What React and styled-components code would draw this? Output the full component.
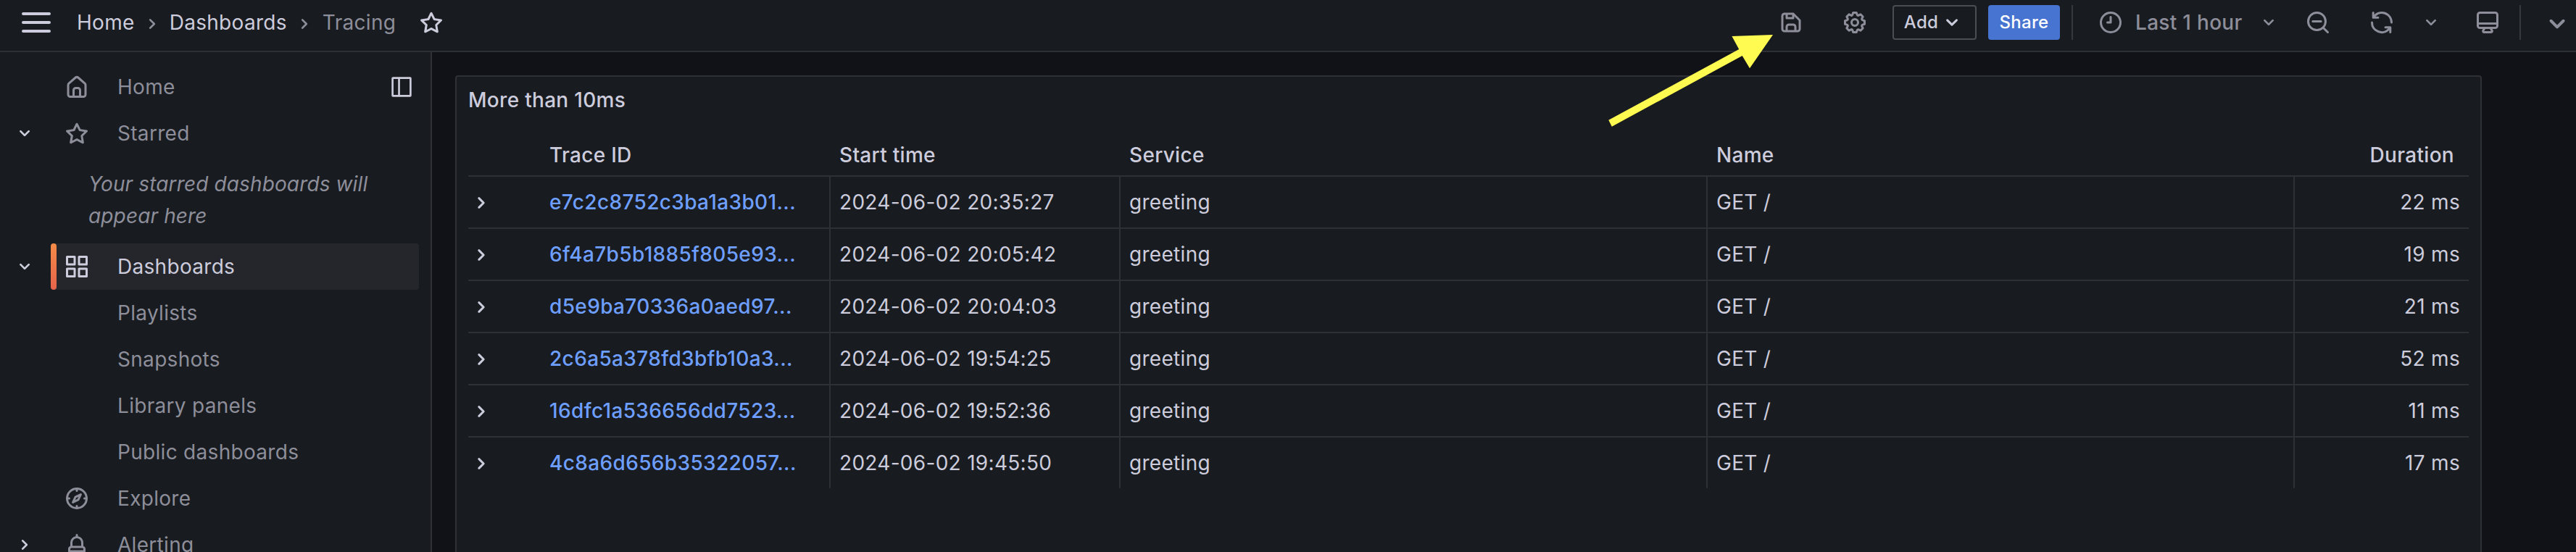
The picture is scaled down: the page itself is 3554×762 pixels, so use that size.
import React from "react";
import styled, { createGlobalStyle, css } from "styled-components";

const color = {
  canvas: "#111217",
  surface: "#181b1f",
  line: "#2e3035",
  text: "#ccccdc",
  muted: "#8d8e9a",
  link: "#6e9fff",
  primary: "#4773d1",
};

const GlobalStyle = createGlobalStyle`
  * { box-sizing: border-box; }
  body {
    margin: 0;
    overflow: hidden;
    background: ${color.canvas};
    color: ${color.text};
    font-family: Inter, "Liberation Sans", sans-serif;
    font-size: 28px;
    line-height: 44px;
    letter-spacing: 0.3px;
  }
`;

const paths = {
  down: "M17,9.17a1,1,0,0,0-1.41,0L12,12.71,8.46,9.17a1,1,0,0,0-1.41,0,1,1,0,0,0,0,1.42l4.24,4.24a1,1,0,0,0,1.42,0L17,10.59A1,1,0,0,0,17,9.17Z",
  right:
    "M14.83,11.29,10.59,7.05a1,1,0,0,0-1.42,0,1,1,0,0,0,0,1.41L12.71,12,9.17,15.54a1,1,0,0,0,0,1.41,1,1,0,0,0,.71.29,1,1,0,0,0,.71-.29l4.24-4.24A1,1,0,0,0,14.83,11.29Z",
  home: "M20,8h0L14,2.74a3,3,0,0,0-4,0L4,8a3,3,0,0,0-1,2.26V19a3,3,0,0,0,3,3H18a3,3,0,0,0,3-3V10.25A3,3,0,0,0,20,8ZM14,20H10V15a1,1,0,0,1,1-1h2a1,1,0,0,1,1,1Zm5-1a1,1,0,0,1-1,1H16V15a3,3,0,0,0-3-3H11a3,3,0,0,0-3,3v5H6a1,1,0,0,1-1-1V10.25a1,1,0,0,1,.34-.75l6-5.25a1,1,0,0,1,1.32,0l6,5.25a1,1,0,0,1,.34.75Z",
  star: "M22,9.67A1,1,0,0,0,21.14,9l-5.69-.83L12.9,3a1,1,0,0,0-1.8,0L8.55,8.16,2.86,9a1,1,0,0,0-.81.68,1,1,0,0,0,.25,1l4.13,4-1,5.68a1,1,0,0,0,.4,1,1,1,0,0,0,1.05.07L12,18.76l5.1,2.68a.93.93,0,0,0,.46.12,1,1,0,0,0,.59-.19,1,1,0,0,0,.4-1l-1-5.68,4.13-4A1,1,0,0,0,22,9.67Zm-6.15,4a1,1,0,0,0-.29.89l.72,4.19-3.76-2a1,1,0,0,0-.94,0l-3.76,2,.72-4.19a1,1,0,0,0-.29-.89l-3-3,4.21-.61a1,1,0,0,0,.76-.55L12,5.7l1.88,3.82a1,1,0,0,0,.76.55l4.21.61Z",
  apps: "M10,13H3a1,1,0,0,0-1,1v7a1,1,0,0,0,1,1h7a1,1,0,0,0,1-1V14A1,1,0,0,0,10,13ZM9,20H4V15H9ZM21,2H14a1,1,0,0,0-1,1v7a1,1,0,0,0,1,1h7a1,1,0,0,0,1-1V3A1,1,0,0,0,21,2ZM20,9H15V4h5Zm1,4H14a1,1,0,0,0-1,1v7a1,1,0,0,0,1,1h7a1,1,0,0,0,1-1V14A1,1,0,0,0,21,13Zm-1,7H15V15h5ZM10,2H3A1,1,0,0,0,2,3v7a1,1,0,0,0,1,1h7a1,1,0,0,0,1-1V3A1,1,0,0,0,10,2ZM9,9H4V4H9Z",
  save: "m20.71 9.29-6-6a1 1 0 0 0-.32-.21A1.09 1.09 0 0 0 14 3H6a3 3 0 0 0-3 3v12a3 3 0 0 0 3 3h12a3 3 0 0 0 3-3v-8a1 1 0 0 0-.29-.71ZM9 5h4v2H9Zm6 14H9v-3a1 1 0 0 1 1-1h4a1 1 0 0 1 1 1Zm4-1a1 1 0 0 1-1 1h-1v-3a3 3 0 0 0-3-3h-4a3 3 0 0 0-3 3v3H6a1 1 0 0 1-1-1V6a1 1 0 0 1 1-1h1v3a1 1 0 0 0 1 1h6a1 1 0 0 0 1-1V6.41l4 4Z",
  cog: "M21.32,9.55l-1.89-.63.89-1.78A1,1,0,0,0,20.13,6L18,3.87a1,1,0,0,0-1.15-.19l-1.78.89-.63-1.89A1,1,0,0,0,13.5,2h-3a1,1,0,0,0-.95.68L8.92,4.57,7.14,3.68A1,1,0,0,0,6,3.87L3.87,6a1,1,0,0,0-.19,1.15l.89,1.78-1.89.63A1,1,0,0,0,2,10.5v3a1,1,0,0,0,.68.95l1.89.63-.89,1.78A1,1,0,0,0,3.87,18L6,20.13a1,1,0,0,0,1.15.19l1.78-.89.63,1.89a1,1,0,0,0,.95.68h3a1,1,0,0,0,.95-.68l.63-1.89,1.78.89A1,1,0,0,0,18,20.13L20.13,18a1,1,0,0,0,.19-1.15l-.89-1.78,1.89-.63A1,1,0,0,0,22,13.5v-3A1,1,0,0,0,21.32,9.55ZM20,12.78l-1.2.4A2,2,0,0,0,17.64,16l.57,1.14-1.1,1.1L16,17.64a2,2,0,0,0-2.79,1.16l-.4,1.2H11.22l-.4-1.2A2,2,0,0,0,8,17.64l-1.14.57-1.1-1.1L6.36,16A2,2,0,0,0,5.2,13.18L4,12.78V11.22l1.2-.4A2,2,0,0,0,6.36,8L5.79,6.89l1.1-1.1L8,6.36A2,2,0,0,0,10.82,5.2l.4-1.2h1.56l.4,1.2A2,2,0,0,0,16,6.36l1.14-.57,1.1,1.1L17.64,8a2,2,0,0,0,1.16,2.79l1.2.4ZM12,8a4,4,0,1,0,4,4A4,4,0,0,0,12,8Zm0,6a2,2,0,1,1,2-2A2,2,0,0,1,12,14Z",
  sync: "M19.91,15.51H15.38a1,1,0,0,0,0,2h2.4A8,8,0,0,1,4,12a1,1,0,0,0-2,0,10,10,0,0,0,16.88,7.23V21a1,1,0,0,0,2,0V16.5A1,1,0,0,0,19.91,15.51ZM12,2A10,10,0,0,0,5.12,4.77V3a1,1,0,0,0-2,0V7.5a1,1,0,0,0,1,1h4.5a1,1,0,0,0,0-2H6.22A8,8,0,0,1,20,12a1,1,0,0,0,2,0A10,10,0,0,0,12,2Z",
  monitor:
    "M19,2H5A3,3,0,0,0,2,5V15a3,3,0,0,0,3,3H7.64l-.58,1a2,2,0,0,0,0,2,2,2,0,0,0,1.75,1h6.46A2,2,0,0,0,17,21a2,2,0,0,0,0-2l-.59-1H19a3,3,0,0,0,3-3V5A3,3,0,0,0,19,2ZM8.77,20,10,18H14l1.2,2ZM20,15a1,1,0,0,1-1,1H5a1,1,0,0,1-1-1V14H20Zm0-3H4V5A1,1,0,0,1,5,4H19a1,1,0,0,1,1,1Z",
  bell: "M18,13.18V10a6,6,0,0,0-5-5.91V3a1,1,0,0,0-2,0V4.09A6,6,0,0,0,6,10v3.18A3,3,0,0,0,4,16v2a1,1,0,0,0,1,1H8.14a4,4,0,0,0,7.72,0H19a1,1,0,0,0,1-1V16A3,3,0,0,0,18,13.18ZM8,10a4,4,0,0,1,8,0v3H8Zm4,10a2,2,0,0,1-1.72-1h3.44A2,2,0,0,1,12,20Zm6-3H6V16a1,1,0,0,1,1-1H17a1,1,0,0,1,1,1Z",
};

const strokes = {
  bars: <path d="M3 6H21M3 12H21M3 18H21" />,
  clock: (
    <>
      <circle cx="12" cy="12" r="9" />
      <path d="M12 7V12H9" />
    </>
  ),
  zoomOut: (
    <>
      <circle cx="11" cy="11" r="8" />
      <path d="M7.2 11H14.8M16.8 16.8L21 21" />
    </>
  ),
  compass: (
    <>
      <circle cx="12" cy="12" r="9" />
      <path d="M12 3V5M12 19V21M3 12H5M19 12H21" />
      <path d="M15.6 8.4L13.3 13.3L8.4 15.6L10.7 10.7Z" />
    </>
  ),
  dock: (
    <>
      <rect x="2.7" y="2.7" width="18.6" height="18.6" rx="0.4" />
      <path d="M9.4 3V21" />
    </>
  ),
};

const Svg = styled.svg`
  display: block;
  flex: none;
  width: ${(p) => p.$size}px;
  height: ${(p) => p.$size}px;
`;

function Icon({ name, size = 36 }) {
  return (
    <Svg $size={size} viewBox="0 0 24 24" aria-hidden="true">
      {paths[name] ? (
        <path d={paths[name]} fill="currentColor" />
      ) : (
        <g fill="none" stroke="currentColor" strokeWidth="2" strokeLinecap="round" strokeLinejoin="round">
          {strokes[name]}
        </g>
      )}
    </Svg>
  );
}

const Page = styled.div`
  position: relative;
  display: flex;
  flex-direction: column;
  height: 762px;
  overflow: hidden;
`;

/* Top bar */
const TopBar = styled.header`
  display: flex;
  flex: none;
  justify-content: space-between;
  height: 72px;
  padding: 0 2px 8px 26px;
  background: ${color.surface};
  border-bottom: 2px solid ${color.line};
`;

const Breadcrumbs = styled.nav`
  display: flex;
  align-items: center;
`;

const MenuButton = styled.button`
  padding: 0;
  border: 0;
  background: none;
  color: ${color.text};
  margin-right: 32px;
`;

const Crumb = styled.span`
  color: ${(p) => (p.$current ? color.muted : color.text)};
  font-weight: 400;
`;

const CrumbArrow = styled.span`
  display: flex;
  justify-content: center;
  width: ${(p) => p.$width}px;
  padding-top: 4px;
  color: ${color.muted};
`;

const StarButton = styled.span`
  margin-left: 31px;
`;

const Actions = styled.div`
  display: flex;
  align-items: center;
  color: ${color.muted};
`;

const IconButton = styled.button`
  display: flex;
  align-items: center;
  justify-content: center;
  width: ${(p) => p.$width || 88}px;
  height: 48px;
  padding: 0;
  border: 0;
  background: none;
  color: inherit;
`;

const Button = styled.button`
  display: flex;
  align-items: center;
  justify-content: center;
  height: 48px;
  padding: 0;
  border-radius: 4px;
  font: 500 24px/44px Inter, "Liberation Sans", sans-serif;
  letter-spacing: 0.3px;
  ${(p) =>
    p.$primary
      ? css`
          width: 99px;
          margin: 0 16px;
          border: 0;
          background: ${color.primary};
          color: #fff;
        `
      : css`
          width: 116px;
          margin-left: 8px;
          gap: 1px;
          border: 2px solid #4b4d54;
          background: none;
          color: ${color.text};
        `}
`;

const Divider = styled.span`
  width: 2px;
  height: 48px;
  background: #37393f;
`;

const TimePicker = styled.div`
  display: flex;
  align-items: center;
  justify-content: space-between;
  width: 278px;
  margin-left: 16px;
  padding: 0 8px 0 18px;
  font-weight: 500;
`;

const TimeLabel = styled.span`
  display: flex;
  align-items: center;
  gap: 16px;
`;

const ViewControls = styled.div`
  display: flex;
  align-items: center;
  margin-left: 10px;
`;

const Collapse = styled.span`
  margin-left: 26px;
  padding-top: 4px;
`;

/* Navigation */
const Body = styled.div`
  display: flex;
  flex: 1;
  min-height: 0;
`;

const Sidebar = styled.aside`
  flex: none;
  width: 596px;
  padding: 16px 16px 0 18px;
  background: ${color.surface};
  border-right: 2px solid ${color.line};
  overflow: hidden;
`;

const NavRow = styled.div`
  display: flex;
  height: 64px;
`;

const Toggle = styled.span`
  display: flex;
  align-items: center;
  width: 52px;
`;

const NavItem = styled.a`
  display: flex;
  flex: 1;
  align-items: center;
  border-radius: 4px;
  padding-right: 8px;
  color: ${(p) => (p.$active ? color.text : color.muted)};
  background: ${(p) => (p.$active ? "#24262b" : "none")};
  &::before {
    content: "";
    width: 8px;
    height: 64px;
    border-radius: 4px;
    background: ${(p) => (p.$active ? "linear-gradient(#f58b48, #e5634a)" : "none")};
  }
`;

const NavIcon = styled.span`
  width: 36px;
  margin: 0 38px 0 10px;
`;

const DockIcon = styled.span`
  margin-left: auto;
  color: ${color.text};
`;

const EmptyNote = styled.p`
  margin: 0;
  padding: 16px 40px 16px 104px;
  color: ${color.muted};
  font-style: italic;
  letter-spacing: 0.13px;
`;

/* Panel */
const Main = styled.main`
  flex: 1;
  padding: 32px 130px 0 32px;
`;

const Panel = styled.section`
  height: 100%;
  padding: 0 16px;
  background: ${color.surface};
  border: 2px solid ${color.line};
  border-bottom: 0;
  border-radius: 4px 4px 0 0;
`;

const PanelTitle = styled.h2`
  margin: 0;
  height: 80px;
  font: 500 28px/64px Inter, "Liberation Sans", sans-serif;
`;

const TableRow = styled.div`
  display: grid;
  grid-template-columns: 100px 400px 400px 810px 810px 240px;
  height: 72px;
  &:not(:last-child) {
    border-bottom: 2px solid ${color.line};
  }
`;

const HeadRow = styled(TableRow)`
  height: 58px;
  font-weight: 500;
`;

const Cell = styled.div`
  display: flex;
  align-items: center;
  height: ${(p) => (p.$head ? "56px" : "70px")};
  padding: 0 12px;
  ${(p) => p.$end && "justify-content: flex-end;"}
  ${(p) => p.$head && p.$end && "padding-right: 20px;"}
  ${(p) => p.$ruled && `border-right: 2px solid ${color.line};`}
`;

const Expander = styled(Cell)`
  padding: 2px 0 0;
`;

const TraceLink = styled.a`
  color: ${color.link};
  font-weight: 500;
  letter-spacing: 0.36px;
`;

const Arrow = styled.svg`
  position: absolute;
  left: 2210px;
  top: 40px;
  width: 250px;
  height: 144px;
`;

const navigation = [
  { label: "Home", icon: "home", dock: true },
  { label: "Starred", icon: "star", toggle: "down", note: "Your starred dashboards will appear here" },
  { label: "Dashboards", icon: "apps", toggle: "down", active: true },
  { label: "Playlists" },
  { label: "Snapshots" },
  { label: "Library panels" },
  { label: "Public dashboards" },
  { label: "Explore", icon: "compass" },
  { label: "Alerting", icon: "bell", toggle: "right" },
];

const traces = [
  ["e7c2c8752c3ba1a3b01...", "2024-06-02 20:35:27", "22 ms"],
  ["6f4a7b5b1885f805e93...", "2024-06-02 20:05:42", "19 ms"],
  ["d5e9ba70336a0aed97...", "2024-06-02 20:04:03", "21 ms"],
  ["2c6a5a378fd3bfb10a3...", "2024-06-02 19:54:25", "52 ms"],
  ["16dfc1a536656dd7523...", "2024-06-02 19:52:36", "11 ms"],
  ["4c8a6d656b35322057...", "2024-06-02 19:45:50", "17 ms"],
];

export default function App() {
  return (
    <Page>
      <GlobalStyle />
      <TopBar>
        <Breadcrumbs>
          <MenuButton aria-label="Menu">
            <Icon name="bars" size={48} />
          </MenuButton>
          <Crumb>Home</Crumb>
          <CrumbArrow $width={48}>
            <Icon name="right" size={32} />
          </CrumbArrow>
          <Crumb>Dashboards</Crumb>
          <CrumbArrow $width={49}>
            <Icon name="right" size={32} />
          </CrumbArrow>
          <Crumb $current>Tracing</Crumb>
          <StarButton>
            <Icon name="star" />
          </StarButton>
        </Breadcrumbs>
        <Actions>
          <IconButton aria-label="Save dashboard">
            <Icon name="save" />
          </IconButton>
          <IconButton aria-label="Dashboard settings">
            <Icon name="cog" />
          </IconButton>
          <Button>
            Add <Icon name="down" />
          </Button>
          <Button $primary>Share</Button>
          <Divider />
          <TimePicker>
            <TimeLabel>
              <Icon name="clock" />
              Last 1 hour
            </TimeLabel>
            <Icon name="down" size={32} />
          </TimePicker>
          <IconButton aria-label="Zoom out">
            <Icon name="zoomOut" />
          </IconButton>
          <IconButton aria-label="Refresh">
            <Icon name="sync" />
          </IconButton>
          <IconButton $width={48} aria-label="Refresh interval">
            <Icon name="down" size={32} />
          </IconButton>
          <ViewControls>
            <IconButton aria-label="Cycle view mode">
              <Icon name="monitor" />
            </IconButton>
            <Divider />
            <Collapse>
              <Icon name="down" size={48} />
            </Collapse>
          </ViewControls>
        </Actions>
      </TopBar>
      <Body>
        <Sidebar>
          {navigation.map((item) => (
            <React.Fragment key={item.label}>
              <NavRow>
                <Toggle>{item.toggle && <Icon name={item.toggle} size={32} />}</Toggle>
                <NavItem $active={item.active}>
                  <NavIcon>{item.icon && <Icon name={item.icon} />}</NavIcon>
                  {item.label}
                  {item.dock && (
                    <DockIcon>
                      <Icon name="dock" size={32} />
                    </DockIcon>
                  )}
                </NavItem>
              </NavRow>
              {item.note && <EmptyNote>{item.note}</EmptyNote>}
            </React.Fragment>
          ))}
        </Sidebar>
        <Main>
          <Panel>
            <PanelTitle>More than 10ms</PanelTitle>
            <HeadRow>
              <Cell $head />
              <Cell $head>Trace ID</Cell>
              <Cell $head>Start time</Cell>
              <Cell $head>Service</Cell>
              <Cell $head>Name</Cell>
              <Cell $head $end>Duration</Cell>
            </HeadRow>
            {traces.map(([id, start, duration]) => (
              <TableRow key={id}>
                <Expander>
                  <Icon name="right" />
                </Expander>
                <Cell $ruled>
                  <TraceLink>{id}</TraceLink>
                </Cell>
                <Cell $ruled>{start}</Cell>
                <Cell $ruled>greeting</Cell>
                <Cell $ruled>GET /</Cell>
                <Cell $end>{duration}</Cell>
              </TableRow>
            ))}
          </Panel>
        </Main>
      </Body>
      <Arrow viewBox="2210 40 250 144" aria-hidden="true">
        <path
          d="M2219.3 165.7L2399.2 68L2389.4 50L2446 48L2414 94.3L2403.7 77L2223.8 174.7Z"
          fill="#fffb50"
        />
      </Arrow>
    </Page>
  );
}
